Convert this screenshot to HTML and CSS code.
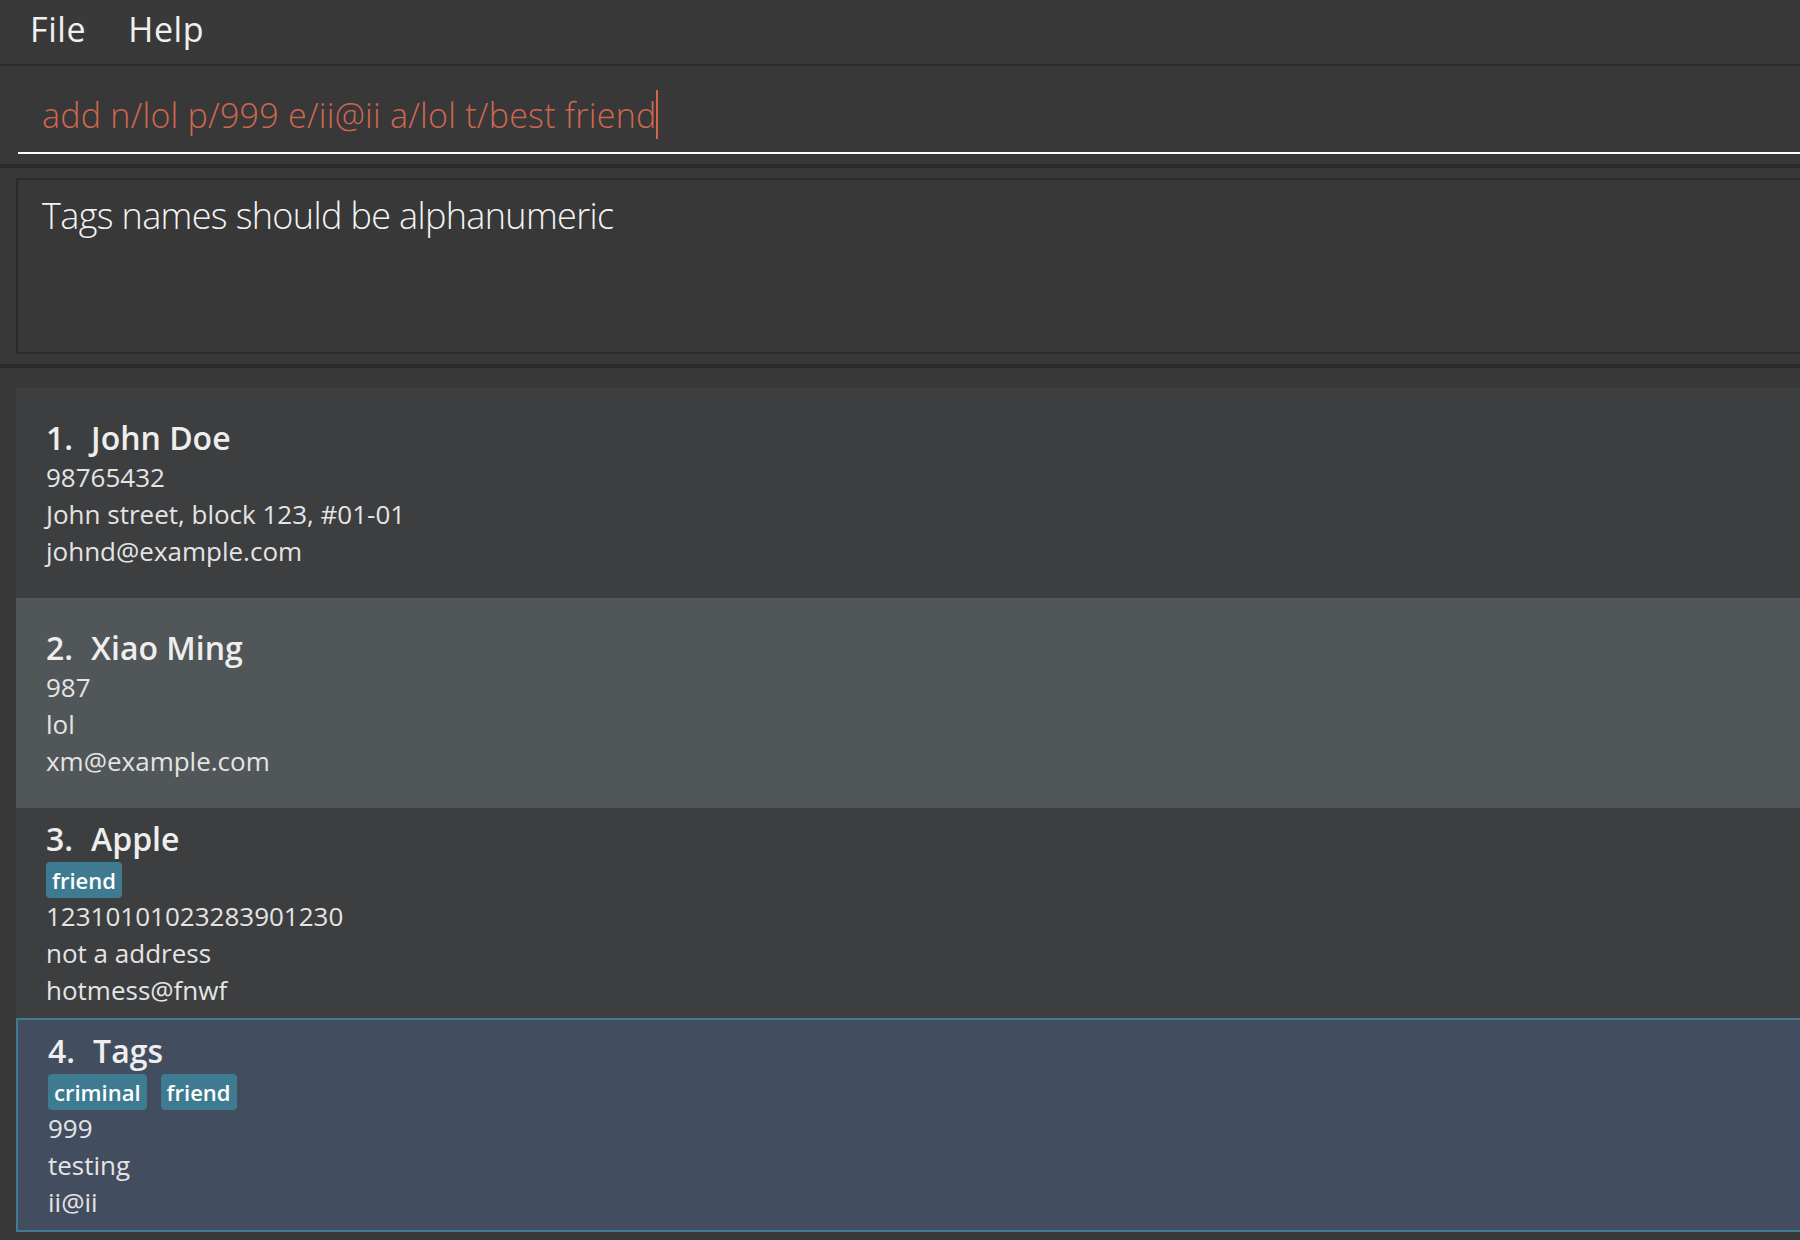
FILE: index.html
```html
<!DOCTYPE html>
<html lang="en">
<head>
<meta charset="utf-8">
<title>Address App</title>
<link rel="stylesheet" href="styles.css">
</head>
<body>
<div class="app">
  <div class="menubar">
    <span class="menu-item">File</span>
    <span class="menu-item">Help</span>
  </div>
  <div class="command-pane">
    <div class="command-field">
      <span class="command-text">add n/lol p/999 e/ii@ii a/lol t/best friend</span><span class="caret"></span>
    </div>
  </div>
  <div class="result-pane">
    <div class="result-box">Tags names should be alphanumeric</div>
  </div>
  <div class="list-pane">
    <div class="card card-even">
      <div class="card-title"><span class="card-id">1.</span><span class="card-name">John Doe</span></div>
      <div class="card-line">98765432</div>
      <div class="card-line">John street, block 123, #01-01</div>
      <div class="card-line">johnd@example.com</div>
    </div>
    <div class="card card-odd">
      <div class="card-title"><span class="card-id">2.</span><span class="card-name">Xiao Ming</span></div>
      <div class="card-line">987</div>
      <div class="card-line">lol</div>
      <div class="card-line">xm@example.com</div>
    </div>
    <div class="card card-even">
      <div class="card-title"><span class="card-id">3.</span><span class="card-name">Apple</span></div>
      <div class="tags"><span class="tag">friend</span></div>
      <div class="card-line">12310101023283901230</div>
      <div class="card-line">not a address</div>
      <div class="card-line">hotmess@fnwf</div>
    </div>
    <div class="card card-selected">
      <div class="card-title"><span class="card-id">4.</span><span class="card-name">Tags</span></div>
      <div class="tags"><span class="tag">criminal</span><span class="tag">friend</span></div>
      <div class="card-line">999</div>
      <div class="card-line">testing</div>
      <div class="card-line">ii@ii</div>
    </div>
  </div>
</div>
</body>
</html>
```

FILE: styles.css
```css
html, body {
  margin: 0;
  padding: 0;
  background: #383838;
  overflow: hidden;
  height: 100%;
}

body {
  font-family: "Open Sans", "Noto Sans", "Liberation Sans", sans-serif;
  color: #ececec;
}

.app {
  display: flex;
  flex-direction: column;
  min-height: 100vh;
}

/* Menu bar */
.menubar {
  display: flex;
  align-items: flex-start;
  height: 64px;
  padding-left: 9px;
  background: #393939;
  border-bottom: 2px solid #2b2b2b;
  box-sizing: content-box;
}

.menu-item {
  font-size: 34px;
  font-weight: 400;
  letter-spacing: 0.6px;
  line-height: 58px;
  padding: 0 21px;
  color: #f0f0f0;
}

/* Command box */
.command-pane {
  padding: 0 0 10px 18px;
  border-bottom: 4px solid #2b2b2b;
  background: #383838;
}

.command-field {
  display: flex;
  align-items: flex-start;
  padding: 24px 0 12px 24px;
  border-bottom: 2px solid #ffffff;
  height: 50px;
}

.command-text {
  font-size: 34px;
  font-weight: 300;
  letter-spacing: 0.25px;
  line-height: 50px;
  color: #d06651;
  white-space: pre;
}

.caret {
  display: inline-block;
  width: 2px;
  height: 49px;
  background: #d06651;
}

/* Result display */
.result-pane {
  padding: 10px 0 10px 16px;
  border-bottom: 4px solid #2b2b2b;
}

.result-box {
  height: 162px;
  margin-right: -4px;
  border: 2px solid #2b2b2b;
  padding: 10px 0 0 24px;
  font-size: 36px;
  font-weight: 300;
  letter-spacing: -0.65px;
  line-height: 52px;
  color: #f4f4f4;
}

/* Person list */
.list-pane {
  padding: 20px 0 0 16px;
  flex: 1;
}

.card {
  display: flex;
  flex-direction: column;
  justify-content: center;
  height: 210px;
  box-sizing: border-box;
  padding-left: 30px;
  margin-right: -4px;
}

.card-even {
  background: #3c3e40;
}

.card-odd {
  background: #515658;
}

.card-selected {
  background: #424d5f;
  border: 2px solid #3e7b91;
  height: 214px;
}

.card-title {
  display: flex;
  align-items: baseline;
  gap: 18px;
  font-size: 32px;
  font-weight: 600;
  line-height: 42px;
  color: #eeeeee;
  padding-top: 1px;
}

.card-line {
  font-size: 26px;
  font-weight: 400;
  line-height: 37px;
  color: #e4e4e4;
}

.tags {
  display: flex;
  gap: 14px;
  margin-top: 2px;
}

.tag {
  background: #3e7b91;
  color: #ffffff;
  font-size: 22px;
  font-weight: 600;
  line-height: 36px;
  padding: 0 6px;
  border-radius: 4px;
}
```
